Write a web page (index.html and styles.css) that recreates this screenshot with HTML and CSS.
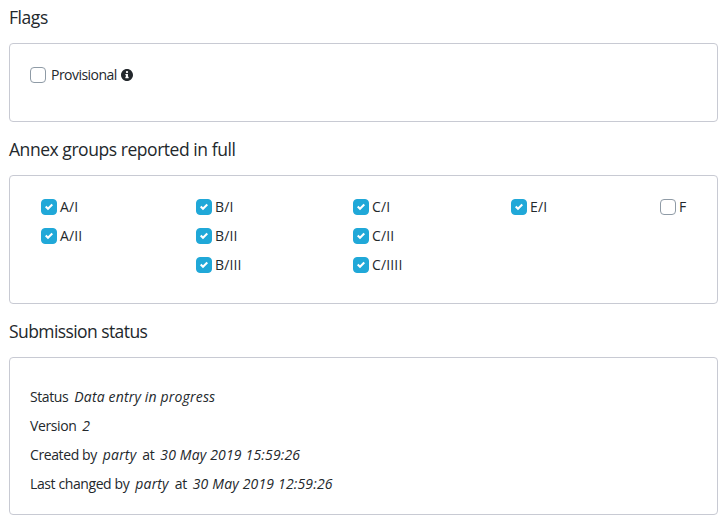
FILE: index.html
```html
<!DOCTYPE html>
<html lang="en">
<head>
<meta charset="utf-8">
<title>Submission</title>
<link rel="stylesheet" href="styles.css">
</head>
<body>
<svg class="defs" width="0" height="0"><symbol id="check" viewBox="0 0 8 8"><path d="M6.564.75l-3.59 3.612-1.538-1.55L0 4.26 2.974 7.25 8 2.193z"/></symbol></svg>
<main>
<h5>Flags</h5>
<section class="card flags">
<label class="item"><span class="box"></span><span class="t prov">Provisional</span><svg class="info" viewBox="8 8 496 496"><path d="M256 8C119 8 8 119 8 256s111 248 248 248 248-111 248-248S393 8 256 8zm0 80a48 48 0 1 1 0 96 48 48 0 0 1 0-96zm68 290c0 6.600-5.400 12-12 12H200c-6.600 0-12-5.400-12-12v-34c0-6.600 5.400-12 12-12h12v-64h-12c-6.600 0-12-5.400-12-12v-34c0-6.600 5.400-12 12-12h84c6.600 0 12 5.400 12 12v110h16c6.600 0 12 5.400 12 12z"/></svg></label>
</section>
<h5>Annex groups reported in full</h5>
<section class="card groups">
<div class="col"><label class="item"><span class="box on"><svg><use href="#check"/></svg></span><span class="t">A/I</span></label><label class="item"><span class="box on"><svg><use href="#check"/></svg></span><span class="t">A/II</span></label></div>
<div class="col"><label class="item"><span class="box on"><svg><use href="#check"/></svg></span><span class="t">B/I</span></label><label class="item"><span class="box on"><svg><use href="#check"/></svg></span><span class="t">B/II</span></label><label class="item"><span class="box on"><svg><use href="#check"/></svg></span><span class="t">B/III</span></label></div>
<div class="col"><label class="item"><span class="box on"><svg><use href="#check"/></svg></span><span class="t">C/I</span></label><label class="item"><span class="box on"><svg><use href="#check"/></svg></span><span class="t">C/II</span></label><label class="item"><span class="box on"><svg><use href="#check"/></svg></span><span class="t">C/IIII</span></label></div>
<div class="col"><label class="item"><span class="box on"><svg><use href="#check"/></svg></span><span class="t">E/I</span></label></div>
<div class="col"><label class="item"><span class="box"></span><span class="t">F</span></label></div>
</section>
<h5 class="tight">Submission status</h5>
<section class="card status">
<p><span>Status</span><em>Data entry in progress</em></p>
<p><span>Version</span><em>2</em></p>
<p><span>Created by</span><em>party</em><span>at</span><em>30 May 2019 15:59:26</em></p>
<p><span>Last changed by</span><em>party</em><span>at</span><em>30 May 2019 12:59:26</em></p>
</section>
</main>
</body>
</html>
```
FILE: styles.css
```css
* { box-sizing: border-box; }
body { margin: 0; background: #fff; color: #23282c; font: 14px/21px "Open Sans", sans-serif; letter-spacing: -0.4px; }
.defs { position: absolute; }
main { padding: 7px 10px 0 9px; }
h5 { margin: 0; height: 36px; font-size: 17.5px; font-weight: 400; line-height: 21px; letter-spacing: -0.45px; }
.tight { letter-spacing: -0.58px; }
.card { border: 1px solid #c8cad3; border-radius: 4px; margin-bottom: 17px; }
.flags { height: 79px; padding: 20px; }
.groups { height: 129px; padding: 20px 0 0 31px; display: grid; grid-template-columns: 155px 157px 158px 149px 1fr; letter-spacing: 0.15px; }
.status { height: 158px; padding: 28px 20px 0; }
.item { display: flex; align-items: center; height: 21px; margin-bottom: 8px; }
.box { width: 16px; height: 16px; border: 1px solid #8f9ba6; border-radius: 4px; display: flex; align-items: center; justify-content: center; margin-right: 3px; flex: none; }
.box.on { background: #20a8d8; border-color: #20a8d8; }
.box svg { width: 8px; height: 8px; fill: #fff; }
.flags .box { margin-right: 5px; }
.prov { letter-spacing: -0.53px; }
.info { width: 12px; height: 12px; margin-left: 4px; fill: #23282c; }
p { margin: 0 0 8px; display: flex; }
p span { margin-right: 6px; }
p em { margin-right: 6px; letter-spacing: 0.17px; }
```
